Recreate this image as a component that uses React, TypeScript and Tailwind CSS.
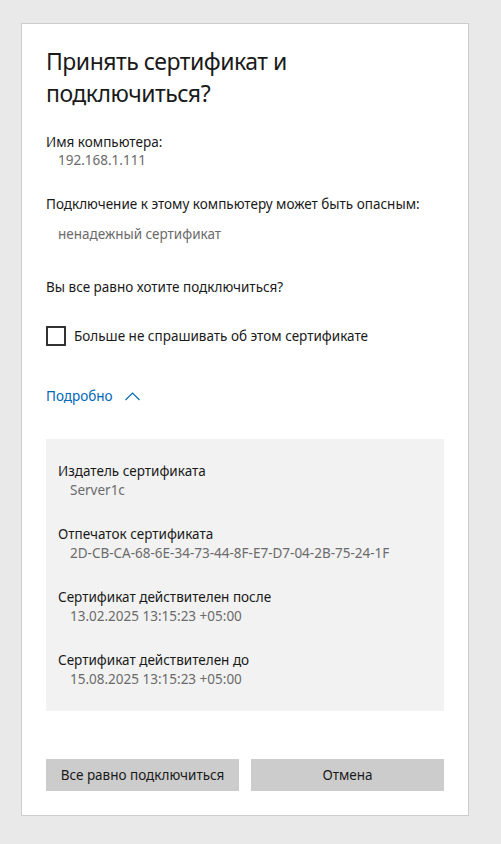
const font = { fontFamily: '"Segoe UI", "Noto Sans", "Open Sans", sans-serif' };

const Field = ({ label, value }: { label: string; value: string }) => (
  <div>
    <div className="text-[13.5px] leading-[19px] text-[#1a1a1a]">{label}</div>
    <div className="pl-3 text-[13.5px] leading-[19px] text-[#6b6b6b]">{value}</div>
  </div>
);

const App = () => {
  return (
    <div className="min-h-screen bg-[#e9e9e9] pt-[23px] pl-[21px]" style={font}>
      <div className="w-[448px] border border-[#cdcdcd] bg-white px-[24px] pt-[21px] pb-[24px]">
        <h1 className="text-[23px] leading-[32px] tracking-[-0.5px] text-[#1a1a1a]">
          Принять сертификат и подключиться?
        </h1>

        <div className="mt-[24px] text-[13.5px] leading-[18px] text-[#1a1a1a]">Имя компьютера:</div>
        <div className="pl-3 text-[13.5px] leading-[18px] text-[#6b6b6b]">192.168.1.111</div>

        <div className="mt-[26px] text-[13.5px] leading-[18px] text-[#1a1a1a]">
          Подключение к этому компьютеру может быть опасным:
        </div>
        <div className="mt-[12px] pl-3 text-[13.5px] leading-[18px] text-[#6b6b6b]">ненадежный сертификат</div>

        <div className="mt-[35px] text-[13.5px] leading-[18px] text-[#1a1a1a]">
          Вы все равно хотите подключиться?
        </div>

        <label className="mt-[30px] flex items-center gap-2">
          <span className="h-5 w-5 border-2 border-[#333333] bg-white" />
          <span className="text-[13.5px] leading-[20px] text-[#1a1a1a]">Больше не спрашивать об этом сертификате</span>
        </label>

        <div className="mt-[40px] flex items-center gap-3 text-[13.5px] leading-[20px] text-[#0067b8]">
          <span>Подробно</span>
          <svg width="15" height="9" viewBox="0 0 15 9" fill="none">
            <path d="M0.5 8 L7.5 1 L14.5 8" stroke="#0067b8" strokeWidth="1.1" />
          </svg>
        </div>

        <div className="mt-[33px] flex flex-col gap-[25px] bg-[#f2f2f2] px-3 pt-[23px] pb-[22px]">
          <Field label="Издатель сертификата" value="Server1c" />
          <Field label="Отпечаток сертификата" value="2D-CB-CA-68-6E-34-73-44-8F-E7-D7-04-2B-75-24-1F" />
          <Field label="Сертификат действителен после" value="13.02.2025 13:15:23 +05:00" />
          <Field label="Сертификат действителен до" value="15.08.2025 13:15:23 +05:00" />
        </div>

        <div className="mt-[48px] grid grid-cols-2 gap-3">
          <button className="h-8 bg-[#cccccc] text-[13.5px] text-[#1a1a1a]">Все равно подключиться</button>
          <button className="h-8 bg-[#cccccc] text-[13.5px] text-[#1a1a1a]">Отмена</button>
        </div>
      </div>
    </div>
  );
};

export default App;
